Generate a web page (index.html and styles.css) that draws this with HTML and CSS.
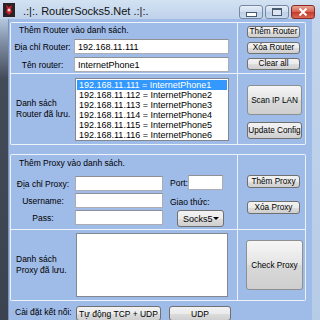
FILE: index.html
```html
<!DOCTYPE html>
<html lang="vi">
<head>
  <meta charset="UTF-8" />
  <title>RouterSocks5.Net</title>
  <link rel="stylesheet" href="styles.css">
</head>
<body>

  <div class="window">
    <!-- Title bar -->
    <div class="titlebar">
      <svg class="app-icon" width="12" height="14" viewBox="0 0 12 14">
        <rect x="0" y="0" width="12" height="14" fill="#2b2226"/>
        <path d="M3 2 L6 4 L9 2 L8 6 L9 9 L6 12 L3 9 L4 6 Z" fill="#c4232c"/>
        <circle cx="6" cy="7" r="1.5" fill="#f0d0c8"/>
      </svg>
      <span class="title">.:|:. RouterSocks5.Net .:|:.</span>
      <div class="caption-buttons">
        <span class="cap cap-min"><i></i></span>
        <span class="cap cap-max"><i></i></span>
        <span class="cap cap-close">
          <svg width="10" height="8" viewBox="0 0 10 8">
            <path d="M1.5 0.5 L8.5 7.5 M8.5 0.5 L1.5 7.5" stroke="#fff" stroke-width="2"/>
          </svg>
        </span>
      </div>
    </div>

    <div class="frame">
      <div class="edge edge-left"></div>

      <div class="client">

        <!-- Router group -->
        <div class="group">
          <div class="cell form-cell">
            <div class="heading">Thêm Router vào danh sách.</div>
            <div class="field">
              <label>Địa chỉ Router:</label>
              <input class="text wide" value="192.168.11.111" />
            </div>
            <div class="field">
              <label>Tên router:</label>
              <input class="text wide" value="InternetPhone1" />
            </div>
          </div>

          <div class="cell side-cell router-actions">
            <button class="btn small">Thêm Router</button>
            <button class="btn small">Xóa Router</button>
            <button class="btn small">Clear all</button>
          </div>

          <div class="cell list-cell">
            <div class="list-label">Danh sách<br>Router đã lưu.</div>
            <ul class="listbox">
              <li class="selected">192.168.11.111 = InternetPhone1</li>
              <li>192.168.11.112 = InternetPhone2</li>
              <li>192.168.11.113 = InternetPhone3</li>
              <li>192.168.11.114 = InternetPhone4</li>
              <li>192.168.11.115 = InternetPhone5</li>
              <li>192.168.11.116 = InternetPhone6</li>
            </ul>
          </div>

          <div class="cell side-cell router-tools">
            <button class="btn scan">Scan IP LAN</button>
            <button class="btn update">Update Config</button>
          </div>
        </div>

        <!-- Proxy group -->
        <div class="group proxy-group">
          <div class="cell form-cell proxy-form">
            <div class="heading">Thêm Proxy vào danh sách.</div>
            <div class="proxy-fields">
              <div class="proxy-left">
                <div class="field">
                  <label>Địa chỉ Proxy:</label>
                  <input class="text narrow" value="" />
                </div>
                <div class="field">
                  <label>Username:</label>
                  <input class="text narrow" value="" />
                </div>
                <div class="field">
                  <label>Pass:</label>
                  <input class="text narrow" value="" />
                </div>
              </div>
              <div class="proxy-right">
                <div class="port-row">
                  <span>Port:</span>
                  <input class="text port" value="" />
                </div>
                <div class="proto-label">Giao thức:</div>
                <div class="combo">Socks5 <span class="arrow"></span></div>
              </div>
            </div>
          </div>

          <div class="cell side-cell proxy-actions">
            <button class="btn small">Thêm Proxy</button>
            <button class="btn small">Xóa Proxy</button>
          </div>

          <div class="cell list-cell">
            <div class="list-label">Danh sách<br>Proxy đã lưu.</div>
            <ul class="listbox proxy-list"></ul>
          </div>

          <div class="cell side-cell proxy-tools">
            <button class="btn check">Check Proxy</button>
          </div>
        </div>

        <!-- Connection settings -->
        <div class="connect-row">
          <span class="connect-label">Cài đặt kết nối:</span>
          <button class="btn auto">Tự động TCP + UDP</button>
          <button class="btn udp">UDP</button>
        </div>

      </div>

      <div class="edge edge-right"></div>
    </div>
  </div>

</body>
</html>
```

FILE: styles.css
```css
html, body {
  margin: 0;
  padding: 0;
  width: 320px;
  height: 320px;
  overflow: hidden;
}

body {
  font-family: "Liberation Sans", Arial, sans-serif;
  font-size: 8.5px;
  color: #000;
}

/* Window frame */
.window {
  height: 320px;
  display: flex;
  flex-direction: column;
  background: #c3d5ec;
}

.titlebar {
  height: 22px;
  display: flex;
  align-items: flex-start;
  padding: 3px 0 0 3px;
  box-sizing: border-box;
  background: linear-gradient(#d3e2f3, #bed2ea);
}

.app-icon {
  display: block;
}

.title {
  font-size: 11px;
  margin: 2px 0 0 8px;
  color: #111;
}

.caption-buttons {
  margin-left: auto;
  margin-top: 2px;
  margin-right: 5px;
  display: flex;
  gap: 2px;
}

.cap {
  width: 24px;
  height: 14px;
  box-sizing: border-box;
  border: 1px solid #7688a2;
  border-radius: 3px;
  background: linear-gradient(#e6eef8, #cddcee 50%, #bccfe7 51%, #c9daee);
  display: flex;
  align-items: center;
  justify-content: center;
}

.cap-min i {
  display: block;
  width: 9px;
  height: 3px;
  margin-top: 4px;
  background: #fff;
  border: 1px solid #4a5a70;
}

.cap-max i {
  display: block;
  width: 8px;
  height: 5px;
  border: 1px solid #4a5a70;
  border-top-width: 2px;
  background: #dbe5f2;
}

.cap-close {
  width: 24px;
  border-color: #8a2a22;
  background: linear-gradient(#e8a596, #d6604f 50%, #c5382a 51%, #d66a55);
}

.frame {
  flex: 1;
  display: flex;
}

.edge {
  width: 8px;
}

.edge-left {
  background: linear-gradient(#b4c7de 0, #8595ac 20px, #434a58 60px, #3b4250);
}

.edge-right {
  background: linear-gradient(#c3d5ec, #b6cbe6);
}

/* Client area */
.client {
  flex: 1;
  background: #9fbbe8;
  border-left: 1px solid #7c93b6;
  padding: 3px 0 0 1px;
  box-sizing: border-box;
}

.group {
  width: 296px;
  display: grid;
  grid-template-columns: 226px 67px;
  grid-template-rows: 50px 70px;
  gap: 1px;
  padding: 1px;
  box-sizing: border-box;
  background: #eef3fb;
  border-radius: 2px;
}

.proxy-group {
  margin-top: 9px;
  grid-template-rows: 74px 70px;
}

.cell {
  background: #9fbbe8;
  box-sizing: border-box;
}

/* Forms */
.form-cell {
  padding-top: 2px;
}

.heading {
  height: 11px;
  line-height: 11px;
  padding-left: 8px;
}

.field {
  display: flex;
  align-items: center;
  height: 15px;
  margin-top: 3px;
}

.field label {
  width: 63px;
  text-align: center;
  flex: none;
}

.text {
  height: 15px;
  box-sizing: border-box;
  border: 1px solid #abadb3;
  border-top-color: #8e9096;
  background: #fff;
  padding: 0 3px;
  margin: 0;
  font-family: inherit;
  font-size: 9px;
  color: #000;
  outline: none;
}

.wide {
  width: 155px;
}

.narrow {
  width: 88px;
}

.proxy-form {
  padding-top: 3px;
}

.proxy-fields {
  display: flex;
  margin-top: 5px;
}

.proxy-left .field {
  margin-top: 2px;
}

.proxy-left .field label {
  width: 64px;
}

.proxy-right {
  margin-left: 7px;
}

.port-row {
  display: flex;
  align-items: center;
  height: 15px;
  margin-top: 1px;
}

.port-row span {
  width: 18px;
}

.port {
  width: 35px;
  height: 15px;
}

.proto-label {
  margin-top: 6px;
  height: 12px;
  line-height: 12px;
}

.combo {
  margin: 2px 0 0 7px;
  width: 47px;
  height: 17px;
  box-sizing: border-box;
  border: 1px solid #707070;
  border-radius: 3px;
  background: linear-gradient(#f2f2f2, #ebebeb 50%, #dddddd 51%, #cfcfcf);
  display: flex;
  align-items: center;
  padding-left: 5px;
  font-size: 9px;
}

.combo .arrow {
  margin-left: auto;
  margin-right: 4px;
  width: 0;
  height: 0;
  border-left: 3px solid transparent;
  border-right: 3px solid transparent;
  border-top: 3px solid #000;
}

/* Lists */
.list-cell {
  display: flex;
  padding-top: 3px;
}

.list-label {
  width: 64px;
  padding-left: 5px;
  box-sizing: border-box;
  align-self: center;
  line-height: 11px;
  margin-top: -3px;
}

.listbox {
  list-style: none;
  margin: 1px 0 0 0;
  padding: 1px;
  width: 154px;
  height: 63px;
  box-sizing: border-box;
  border: 1px solid #828790;
  background: #fff;
  overflow: hidden;
  font-size: 9px;
}

.listbox li {
  height: 10px;
  line-height: 10px;
  padding-left: 2px;
  white-space: nowrap;
}

.listbox li.selected {
  background: #3399ff;
  color: #fff;
}

.proxy-list {
  margin: 0 0 0 1px;
  width: 152px;
  height: 64px;
}

/* Side buttons */
.side-cell {
  display: flex;
  flex-direction: column;
  padding-left: 9px;
}

.btn {
  font-family: inherit;
  font-size: 8.2px;
  color: #000;
  padding: 0;
  margin: 0;
  box-sizing: border-box;
  border: 1px solid #707070;
  border-radius: 3px;
  background: linear-gradient(#f2f2f2, #ebebeb 50%, #dddddd 51%, #cfcfcf);
  white-space: nowrap;
  overflow: hidden;
}

.btn.small {
  width: 53px;
  height: 12px;
  line-height: 10px;
}

.router-actions {
  padding-top: 3px;
  gap: 4px;
}

.router-tools {
  padding-top: 11px;
  gap: 7px;
}

.scan {
  width: 55px;
  height: 30px;
  border-color: #8e8f8f;
  background: linear-gradient(#f6f6f6, #e4e4e4 50%, #d9d9d9 51%, #cfcfcf);
}

.update {
  width: 55px;
  height: 17px;
}

.proxy-actions {
  padding-top: 20px;
  gap: 13px;
}

.proxy-actions .btn.small {
  height: 13px;
}

.proxy-tools {
  padding-top: 10px;
  padding-left: 8px;
}

.check {
  width: 57px;
  height: 50px;
  border-color: #8e8f8f;
  background: linear-gradient(#f6f6f6, #e4e4e4 50%, #d9d9d9 51%, #cfcfcf);
}

/* Bottom row */
.connect-row {
  display: flex;
  align-items: flex-start;
  margin-top: 5px;
}

.connect-label {
  width: 66px;
  padding-left: 5px;
  box-sizing: border-box;
  line-height: 13px;
  white-space: nowrap;
}

.auto {
  width: 85px;
  height: 15px;
  font-size: 8.5px;
}

.udp {
  width: 62px;
  height: 15px;
  margin-left: 8px;
  font-size: 8.5px;
}
```
